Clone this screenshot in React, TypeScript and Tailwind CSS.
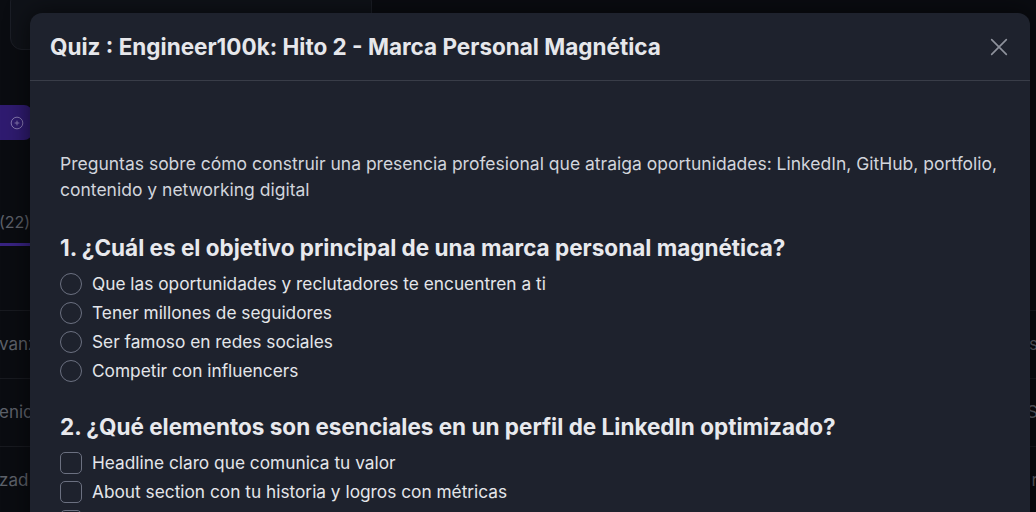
import React from 'react';

type Question = {
  title: string;
  kind: 'radio' | 'checkbox';
  options: string[];
};

const questions: Question[] = [
  {
    title: '1. ¿Cuál es el objetivo principal de una marca personal magnética?',
    kind: 'radio',
    options: [
      'Que las oportunidades y reclutadores te encuentren a ti',
      'Tener millones de seguidores',
      'Ser famoso en redes sociales',
      'Competir con influencers',
    ],
  },
  {
    title: '2. ¿Qué elementos son esenciales en un perfil de LinkedIn optimizado?',
    kind: 'checkbox',
    options: [
      'Headline claro que comunica tu valor',
      'About section con tu historia y logros con métricas',
      'Recomendaciones de colegas y managers',
    ],
  },
];

const font = { fontFamily: 'Inter, "Noto Sans", sans-serif' };

// dimmed page that sits behind the dialog
const BackgroundPage: React.FC = () => (
  <div className="flex flex-col h-full text-[#7d828e]">
    <div className="flex">
      <div className="ml-[10px] mt-[-10px] w-[362px] h-[60px] rounded-xl border border-[#252933] bg-[#151820]" />
    </div>
    <div className="mt-[55px] flex">
      <div className="w-[60px] h-[35px] ml-[-28px] rounded-lg bg-[#3f2596] flex items-center justify-end pr-[8px]">
        <svg width="14" height="14" viewBox="0 0 24 24" fill="none" stroke="#b9a8ee" strokeWidth="1.6">
          <circle cx="12" cy="12" r="10" />
          <path d="M12 8v8M8 12h8" />
        </svg>
      </div>
    </div>
    <div className="mt-[67px] flex flex-col">
      <span className="text-[16px] leading-[30px] -ml-[1px]">(22)</span>
      <div className="mt-[6px] h-[3px] w-[40px] bg-[#4b2fae]" />
    </div>
    <div className="mt-[64px] flex flex-col">
      {['vanz', 'enic', 'zad'].map((t, i) => (
        <div key={t} className="flex justify-between h-[68px] border-t border-[#20232b] items-center text-[17px]">
          <span className="-ml-[1px]">{t}</span>
          <span className="mr-[-2px]">{['s', 'S', 'r'][i]}</span>
        </div>
      ))}
    </div>
  </div>
);

const Marker: React.FC<{ kind: 'radio' | 'checkbox' }> = ({ kind }) => (
  <span
    className={`w-[22px] h-[22px] shrink-0 border-[1.5px] border-[#6b7080] ${kind === 'radio' ? 'rounded-full' : 'rounded-[5px]'}`}
  />
);

const App: React.FC = () => {
  return (
    <div className="relative w-[1036px] h-[512px] overflow-hidden bg-[#0e1017]" style={font}>
      <BackgroundPage />
      <div className="absolute inset-0 bg-black/25" />

      <div className="absolute left-[30px] top-[13px] w-[1000px] h-[560px] rounded-xl bg-[#1e222d] shadow-[0_0_24px_rgba(0,0,0,0.6)]">
        <div className="flex items-center justify-between h-[68px] pl-5 pr-5 border-b border-[#393d48]">
          <h2 className="text-[22.5px] font-bold text-[#e6e7eb]">
            Quiz : Engineer100k: Hito 2 - Marca Personal Magnética
          </h2>
          <svg width="22" height="22" viewBox="0 0 24 24" fill="none" stroke="#8e929c" strokeWidth="1.8" strokeLinecap="round">
            <path d="M4 4l16 16M20 4L4 20" />
          </svg>
        </div>

        <div className="pt-[70px] px-[30px]">
          <p className="text-[17.5px] leading-[26px] text-[#d2d5dc]">
            Preguntas sobre cómo construir una presencia profesional que atraiga oportunidades: LinkedIn, GitHub, portfolio, contenido y networking digital
          </p>

          <div className="mt-[31px] flex flex-col gap-[28px]">
            {questions.map(q => (
              <div key={q.title}>
                <h3 className="text-[22.5px] leading-[28px] font-bold text-[#e8e9ed]">{q.title}</h3>
                <div className="mt-[7px] flex flex-col">
                  {q.options.map(o => (
                    <label key={o} className="flex items-center gap-[10px] h-[29px] text-[17.3px] text-[#e4e6ea]">
                      <Marker kind={q.kind} />
                      <span>{o}</span>
                    </label>
                  ))}
                </div>
              </div>
            ))}
          </div>
        </div>
      </div>
    </div>
  );
};

export default App;
